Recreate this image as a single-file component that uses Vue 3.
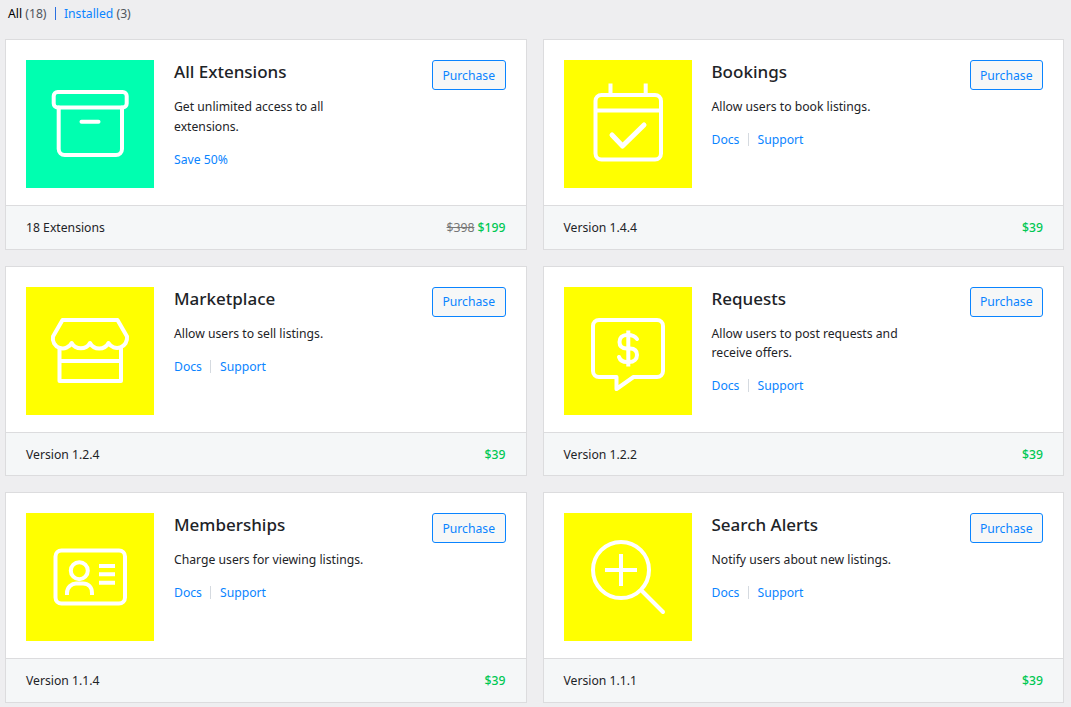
<script setup>
const cards = [
  { title: 'All Extensions', desc: 'Get unlimited access to all extensions.', save: 'Save 50%', foot: '18 Extensions', old: '$398', price: '$199', icon: 'box', color: '#00ffb0' },
  { title: 'Bookings', desc: 'Allow users to book listings.', foot: 'Version 1.4.4', price: '$39', icon: 'calendar', color: '#ffff00' },
  { title: 'Marketplace', desc: 'Allow users to sell listings.', foot: 'Version 1.2.4', price: '$39', icon: 'store', color: '#ffff00' },
  { title: 'Requests', desc: 'Allow users to post requests and receive offers.', foot: 'Version 1.2.2', price: '$39', icon: 'bubble', color: '#ffff00' },
  { title: 'Memberships', desc: 'Charge users for viewing listings.', foot: 'Version 1.1.4', price: '$39', icon: 'id', color: '#ffff00' },
  { title: 'Search Alerts', desc: 'Notify users about new listings.', foot: 'Version 1.1.1', price: '$39', icon: 'search', color: '#ffff00' },
]
</script>

<template>
  <div class="page">
    <ul class="filters">
      <li class="current">All <span class="count">(18)</span></li>
      <li class="sep"></li>
      <li><a href="#">Installed</a> <span class="count">(3)</span></li>
    </ul>
    <div class="grid">
      <section v-for="c in cards" :key="c.title" class="card">
        <div class="body">
          <div class="thumb" :style="{ background: c.color }">
            <svg viewBox="0 0 128 128" width="128" height="128" fill="none" stroke="#fff" stroke-width="4" stroke-linecap="round" stroke-linejoin="round">
              <g v-if="c.icon === 'box'">
                <rect x="27.700" y="32" width="73" height="15.500" rx="4" />
                <path d="M32.700 47.500V89a6 6 0 0 0 6 6H90a6 6 0 0 0 6-6V47.500" />
                <path d="M55.500 61.700H72.500" />
              </g>
              <g v-else-if="c.icon === 'calendar'">
                <rect x="31.500" y="35" width="65.500" height="64.500" rx="6" />
                <path d="M46.500 23.500V35M81.700 23.500V35" stroke-linecap="butt" />
                <path d="M31.500 50.500H97" stroke-linecap="butt" />
                <path d="M48 75L58.500 86L80 65" stroke-width="5" />
              </g>
              <g v-else-if="c.icon === 'store'">
                <path d="M36.500 33H91.500L101 49.500A10 10 0 0 1 82.500 56A10.500 10.500 0 0 1 64 56A10.500 10.500 0 0 1 45.700 56A10 10 0 0 1 27 49.500Z" />
                <path d="M33.500 61V94H95V61M33.500 74H95" />
              </g>
              <g v-else-if="c.icon === 'bubble'">
                <path d="M35 33H93a6 6 0 0 1 6 6V84a6 6 0 0 1 -6 6H69.500L52.500 102V90H35a6 6 0 0 1 -6 -6V39a6 6 0 0 1 6 -6Z" />
                <path d="M64.300 43.500V79.500" stroke-linecap="butt" />
                <path d="M73 52C71 49 68 48 64 48H63C58 48 55.500 51 55.500 55C55.500 59 58 61.500 63 61.500H66C71 61.500 73 64 73 68C73 72 70 75 65 75H63C59 75 56 73 55 70" />
              </g>
              <g v-else-if="c.icon === 'id'">
                <rect x="29.500" y="37.500" width="69.500" height="53" rx="6" />
                <circle cx="53.300" cy="57.700" r="8.500" />
                <path d="M41 82V80C41 74 46 70.500 50 70.500H57C62 70.500 66 74 66 80V82" stroke-linecap="butt" />
                <path d="M73 53H89M73 61.300H89M73 69.700H89" stroke-linecap="butt" />
              </g>
              <g v-else>
                <circle cx="57" cy="57" r="28" />
                <path d="M41 57H73M57 41V73" stroke-linecap="butt" />
                <path d="M78.500 78.500L99 99" />
              </g>
            </svg>
          </div>
          <div class="info">
            <h3>{{ c.title }}</h3>
            <p class="desc">{{ c.desc }}</p>
            <p v-if="c.save" class="links"><a href="#">{{ c.save }}</a></p>
            <p v-else class="links"><a href="#">Docs</a><span class="bar"></span><a href="#">Support</a></p>
          </div>
          <button class="buy">Purchase</button>
        </div>
        <footer class="foot">
          <span>{{ c.foot }}</span>
          <span class="prices"><del v-if="c.old">{{ c.old }}</del> <strong>{{ c.price }}</strong></span>
        </footer>
      </section>
    </div>
  </div>
</template>

<style>
html, body { margin: 0; background: #eeeef0; }
</style>

<style scoped>
.page {
  width: 1071px;
  height: 707px;
  overflow: hidden;
  box-sizing: border-box;
  padding: 0 7px 0 5px;
  font-family: "Noto Sans", "Open Sans", sans-serif;
  font-size: 12.200px;
  line-height: 19px;
  color: #1d2327;
}
.filters {
  display: flex;
  align-items: flex-start;
  gap: 8.200px;
  list-style: none;
  margin: 0;
  padding: 4px 0 0 3px;
  height: 39px;
  box-sizing: border-box;
}
.current { color: #000; }
.count { color: #50575e; }
.sep {
  width: 1px;
  height: 13px;
  margin-top: 3px;
  background: #2a6fe0;
}
a { color: #0a84ff; text-decoration: none; }
.grid {
  display: grid;
  grid-template-columns: 1fr 1fr;
  column-gap: 16px;
  row-gap: 16px;
}
.card {
  background: #fff;
  border: 1px solid #dcdcde;
  display: flex;
  flex-direction: column;
}
.body {
  display: flex;
  align-items: flex-start;
  padding: 20px 20px 17px;
}
.thumb {
  width: 128px;
  height: 128px;
  flex: none;
}
.thumb svg { display: block; }
.info {
  flex: 1;
  min-width: 0;
  padding-left: 20px;
  max-width: 195px;
}
.info h3 {
  margin: 0;
  font-size: 17px;
  line-height: 24px;
  font-weight: 500;
  color: #1d2327;
}
.desc { margin: 13.200px 0 0; line-height: 19.500px; }
.links { margin: 13.400px 0 0; display: flex; align-items: center; }
.bar {
  width: 1px;
  height: 13px;
  background: #d5dae0;
  margin: 0 8.500px;
}
.buy {
  margin-left: auto;
  width: 73.500px;
  height: 30px;
  box-sizing: border-box;
  padding: 0.800px 0 0;
  background: #f6f7f7;
  border: 1px solid #0a84ff;
  border-radius: 3px;
  color: #0a84ff;
  font: inherit;
  cursor: pointer;
}
.foot {
  display: flex;
  justify-content: space-between;
  align-items: center;
  height: 43.600px;
  padding: 0.500px 20px 0;
  box-sizing: border-box;
  flex: none;
  background: #f5f7f8;
  border-top: 1px solid #dcdcde;
}
.prices del { color: #777; }
.prices strong { color: #00c853; font-weight: 500; }
</style>
